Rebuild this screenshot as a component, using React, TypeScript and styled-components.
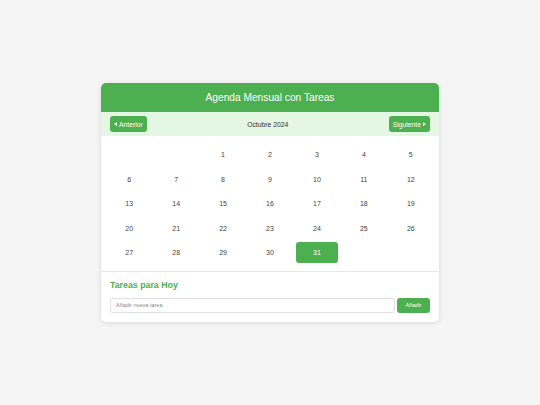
import React from 'react';
import styled, { createGlobalStyle } from 'styled-components';

const GlobalStyle = createGlobalStyle`
  html, body {
    margin: 0;
    padding: 0;
    background: #f5f5f5;
    font-family: "Liberation Sans", Arial, sans-serif;
  }
`;

const Page = styled.div`
  height: 405px;
  display: flex;
  align-items: center;
  justify-content: center;
`;

const Card = styled.div`
  width: 338px;
  background: #fff;
  border-radius: 5px;
  box-shadow: 0 1px 5px rgba(0, 0, 0, 0.12);
  overflow: hidden;
`;

const Header = styled.div`
  height: 29px;
  background: #4caf50;
  color: #fff;
  font-size: 10.2px;
  display: flex;
  align-items: center;
  justify-content: center;
`;

const Nav = styled.div`
  height: 24px;
  background: #e3f7e3;
  display: flex;
  align-items: center;
  justify-content: space-between;
  padding: 0 9px;
`;

const NavButton = styled.button`
  height: 16px;
  padding: 0 4px;
  border: none;
  border-radius: 3px;
  background: #4caf50;
  color: #fff;
  font-family: inherit;
  font-size: 6.8px;
  display: flex;
  align-items: center;
  gap: 2px;
`;

const Month = styled.div`
  font-size: 6.8px;
  color: #333;
`;

const Grid = styled.div`
  display: grid;
  grid-template-columns: repeat(7, 1fr);
  grid-auto-rows: 21px;
  gap: 3.5px 4.5px;
  padding: 8px 7px 7.5px;
`;

const Day = styled.div<{ $today?: boolean }>`
  display: flex;
  align-items: center;
  justify-content: center;
  font-size: 7px;
  border-radius: 3px;
  color: ${(p) => (p.$today ? '#fff' : '#444')};
  background: ${(p) => (p.$today ? '#4caf50' : 'transparent')};
`;

const Tasks = styled.div`
  border-top: 1px solid #e6e6e6;
  padding: 8px 9px 9px;
`;

const TasksTitle = styled.div`
  color: #4caf50;
  font-size: 8.8px;
  font-weight: bold;
  margin-bottom: 8px;
`;

const Row = styled.div`
  display: flex;
  gap: 2px;
`;

const Input = styled.input`
  flex: 1;
  height: 15px;
  box-sizing: border-box;
  border: 1px solid #e0e0e0;
  border-radius: 3px;
  padding: 0 5px;
  font-family: inherit;
  font-size: 5.5px;
  outline: none;
  &::placeholder {
    color: #888;
  }
`;

const AddButton = styled.button`
  width: 33px;
  height: 15px;
  border: none;
  border-radius: 3px;
  background: #4caf50;
  color: #fff;
  font-family: inherit;
  font-size: 5.5px;
`;

const Arrow = ({ dir }: { dir: 'left' | 'right' }) => (
  <svg width="3" height="4" viewBox="0 0 4 5">
    {dir === 'left' ? <path d="M4 0 L0 2.5 L4 5 Z" fill="#fff" /> : <path d="M0 0 L4 2.5 L0 5 Z" fill="#fff" />}
  </svg>
);

export default function App() {
  const cells: (number | null)[] = [null, null];
  for (let d = 1; d <= 31; d++) cells.push(d);
  return (
    <>
      <GlobalStyle />
      <Page>
        <Card>
          <Header>Agenda Mensual con Tareas</Header>
          <Nav>
            <NavButton>
              <Arrow dir="left" />
              Anterior
            </NavButton>
            <Month>Octubre 2024</Month>
            <NavButton>
              Siguiente
              <Arrow dir="right" />
            </NavButton>
          </Nav>
          <Grid>
            {cells.map((d, i) => (
              <Day key={i} $today={d === 31}>
                {d ?? ''}
              </Day>
            ))}
          </Grid>
          <Tasks>
            <TasksTitle>Tareas para Hoy</TasksTitle>
            <Row>
              <Input placeholder="Añadir nueva tarea" />
              <AddButton>Añadir</AddButton>
            </Row>
          </Tasks>
        </Card>
      </Page>
    </>
  );
}
